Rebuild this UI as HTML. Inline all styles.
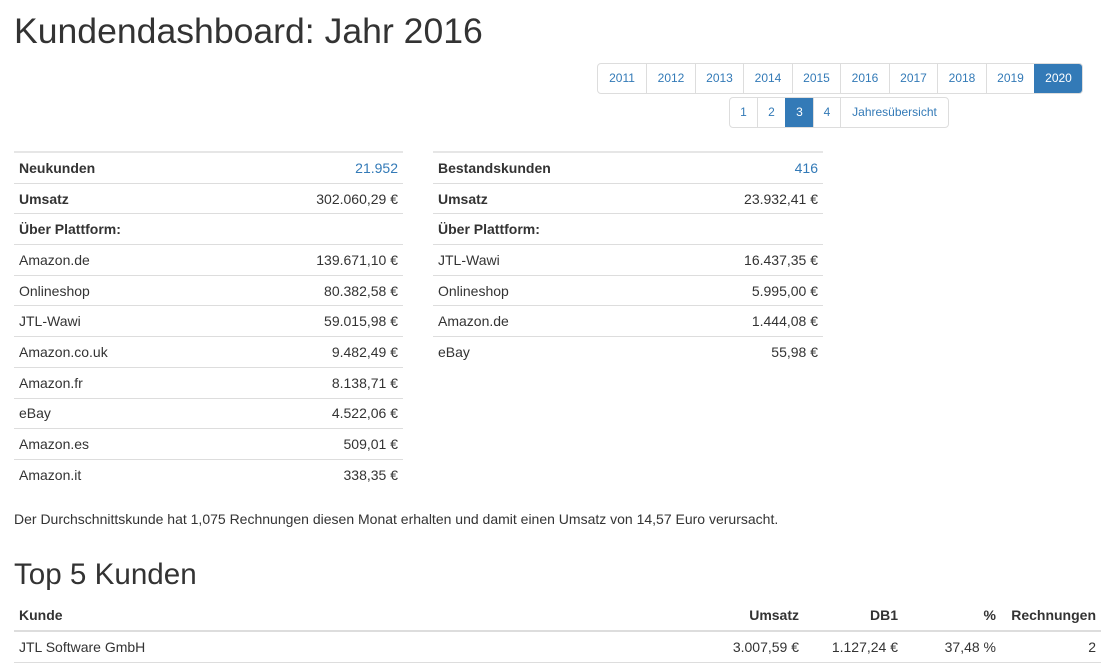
<!DOCTYPE html>
<html><head><meta charset="utf-8"><style>
body{margin:0;width:1109px;height:665px;overflow:hidden;background:#fff;font-family:"Liberation Sans",Arial,sans-serif;font-size:14px;color:#333;position:relative}
h1{position:absolute;left:14px;top:11px;margin:0;font-size:35.6px;font-weight:500;line-height:40px}
h2{position:absolute;left:14px;top:558px;margin:0;font-size:29.6px;font-weight:500;line-height:34px}
.pg{position:absolute;display:flex;border:1px solid #ddd;border-radius:4px;overflow:hidden}
.pg span{display:block;border-left:1px solid #ddd;color:#337ab7;font-size:12px;text-align:center;box-sizing:border-box;line-height:29px!important}
.pg span:first-child{border-left:none}
.pg span.a{background:#337ab7;color:#fff;border-color:#337ab7}
table{position:absolute;border-collapse:collapse}
td,th{padding:0 5px;height:29.7px;border-top:1px solid #ddd;text-align:left;white-space:nowrap}
.r{text-align:right}
.b{font-weight:bold}
.l{color:#337ab7}
p{position:absolute;left:14px;top:511px;margin:0}
.top tr:first-child td{border-top:2px solid #e6e6e6}
</style></head><body>
<h1>Kundendashboard: Jahr 2016</h1>
<div class="pg" style="left:597px;top:63px;height:29px">
<span style="width:48px">2011</span><span style="width:49px">2012</span><span style="width:48px">2013</span><span style="width:49px">2014</span><span style="width:48px">2015</span><span style="width:49px">2016</span><span style="width:48px">2017</span><span style="width:49px">2018</span><span style="width:48px">2019</span><span class="a" style="width:48px">2020</span>
</div>
<div class="pg" style="left:729px;top:97px;height:29px">
<span style="width:27px">1</span><span style="width:28px">2</span><span class="a" style="width:28px">3</span><span style="width:27px">4</span><span style="width:108px">Jahresübersicht</span>
</div>
<table class="top" style="left:14px;top:151px;width:389px">
<tr><td class="b">Neukunden</td><td class="r l">21.952</td></tr>
<tr><td class="b">Umsatz</td><td class="r">302.060,29 €</td></tr>
<tr><td class="b">Über Plattform:</td><td></td></tr>
<tr><td>Amazon.de</td><td class="r">139.671,10 €</td></tr>
<tr><td>Onlineshop</td><td class="r">80.382,58 €</td></tr>
<tr><td>JTL-Wawi</td><td class="r">59.015,98 €</td></tr>
<tr><td>Amazon.co.uk</td><td class="r">9.482,49 €</td></tr>
<tr><td>Amazon.fr</td><td class="r">8.138,71 €</td></tr>
<tr><td>eBay</td><td class="r">4.522,06 €</td></tr>
<tr><td>Amazon.es</td><td class="r">509,01 €</td></tr>
<tr><td>Amazon.it</td><td class="r">338,35 €</td></tr>
</table>
<table class="top" style="left:433px;top:151px;width:390px">
<tr><td class="b">Bestandskunden</td><td class="r l">416</td></tr>
<tr><td class="b">Umsatz</td><td class="r">23.932,41 €</td></tr>
<tr><td class="b">Über Plattform:</td><td></td></tr>
<tr><td>JTL-Wawi</td><td class="r">16.437,35 €</td></tr>
<tr><td>Onlineshop</td><td class="r">5.995,00 €</td></tr>
<tr><td>Amazon.de</td><td class="r">1.444,08 €</td></tr>
<tr><td>eBay</td><td class="r">55,98 €</td></tr>
</table>
<p>Der Durchschnittskunde hat 1,075 Rechnungen diesen Monat erhalten und damit einen Umsatz von 14,57 Euro verursacht.</p>
<h2>Top 5 Kunden</h2>
<table style="left:14px;top:600px;width:1087px">
<tr><th style="border-top:none;border-bottom:2px solid #ddd;height:30px">Kunde</th><th class="r" style="border-top:none;border-bottom:2px solid #ddd;width:90px">Umsatz</th><th class="r" style="border-top:none;border-bottom:2px solid #ddd;width:89px">DB1</th><th class="r" style="border-top:none;border-bottom:2px solid #ddd;width:88px">%</th><th class="r" style="border-top:none;border-bottom:2px solid #ddd;width:90px">Rechnungen</th></tr>
<tr><td style="border-bottom:1px solid #ddd">JTL Software GmbH</td><td class="r" style="border-bottom:1px solid #ddd">3.007,59 €</td><td class="r" style="border-bottom:1px solid #ddd">1.127,24 €</td><td class="r" style="border-bottom:1px solid #ddd">37,48 %</td><td class="r" style="border-bottom:1px solid #ddd">2</td></tr>
</table>
</body></html>
